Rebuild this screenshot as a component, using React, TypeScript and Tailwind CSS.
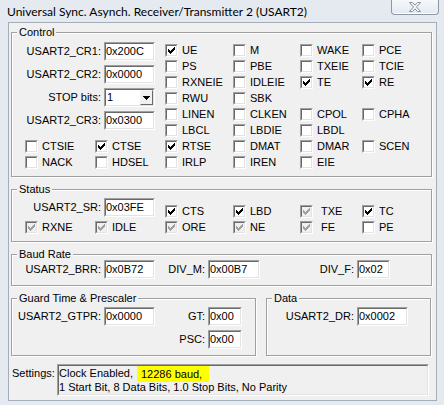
import React from 'react';

// classic 7x7 windows check glyph
const CHECK_D =
  'M6 0h1v1h-1z M5 1h2v1h-2z M0 2h1v1h-1z M4 2h3v1h-3z M0 3h2v1h-2z M3 3h3v1h-3z M0 4h5v1h-5z M1 5h3v1h-3z M2 6h1v1h-1z';

function Check({ checked, disabled }: { checked?: boolean; disabled?: boolean }) {
  return (
    <span className="flex h-[13px] w-[13px] shrink-0 border border-t-[#a0a0a0] border-l-[#a0a0a0] border-r-white border-b-white">
      <span
        className={
          'flex h-[11px] w-[11px] items-start border border-t-[#696969] border-l-[#696969] border-r-[#e3e3e3] border-b-[#e3e3e3] ' +
          (disabled ? 'bg-[#f0f0f0]' : 'bg-white')
        }
      >
        {checked && (
          <svg width="7" height="7" viewBox="0 0 7 7" shapeRendering="crispEdges" className="ml-[1px] mt-[1px]">
            <path d={CHECK_D} fill={disabled ? '#a0a0a0' : '#000'} />
          </svg>
        )}
      </span>
    </span>
  );
}

interface BoxProps {
  label?: string;
  checked?: boolean;
  disabled?: boolean;
  wide?: boolean;
}

function Box({ label, checked, disabled, wide }: BoxProps) {
  if (!label) return <div className="h-[16px]" />;
  return (
    <div className="flex h-[16px] items-center">
      <Check checked={checked} disabled={disabled} />
      <span className={wide ? 'ml-[8px]' : 'ml-[4px]'}>{label}</span>
    </div>
  );
}

function Edit({ value, width }: { value: string; width: string }) {
  return (
    <div className={'ml-[3px] h-[19px] shrink-0 border border-t-[#a0a0a0] border-l-[#a0a0a0] border-r-white border-b-white ' + width}>
      <div className="h-full border border-t-[#696969] border-l-[#696969] border-r-[#e3e3e3] border-b-[#e3e3e3] bg-white leading-[15px]">
        {value}
      </div>
    </div>
  );
}

function Field({ label, value, lw = 'w-[89px]', iw = 'w-[51px]' }: { label: string; value: string; lw?: string; iw?: string }) {
  return (
    <div className="flex h-[19px] items-center">
      <span className={'shrink-0 text-right ' + lw}>{label}</span>
      <Edit value={value} width={iw} />
    </div>
  );
}

function Combo({ label, value }: { label: string; value: string }) {
  return (
    <div className="flex h-[19px] items-center">
      <span className="w-[89px] shrink-0 text-right">{label}</span>
      <div className="ml-[3px] h-[19px] w-[51px] border border-t-[#a0a0a0] border-l-[#a0a0a0] border-r-white border-b-white">
        <div className="flex h-full border border-t-[#696969] border-l-[#696969] border-r-[#e3e3e3] border-b-[#e3e3e3] bg-white">
          <span className="flex-1 pl-[1px] leading-[15px]">{value}</span>
          <div className="flex w-[13px] items-center justify-center border border-t-[#f4f4f4] border-l-[#f4f4f4] border-r-[#696969] border-b-[#696969] bg-[#f0f0f0]">
            <svg width="7" height="4" viewBox="0 0 7 4" shapeRendering="crispEdges">
              <path d="M0 0h7v1h-1v1h-1v1h-1v1h-1v-1h-1v-1h-1v-1h-1z" fill="#000" />
            </svg>
          </div>
        </div>
      </div>
    </div>
  );
}

function Group({ title, className, pad, children }: { title: string; className?: string; pad?: string; children?: React.ReactNode }) {
  return (
    <div className={'border border-[#a0a0a0] shadow-[inset_1px_1px_0_#fff,1px_1px_0_#fff] ' + (className ?? '')}>
      <div className="-mt-[8px] -mb-[6px] ml-[5px] w-fit bg-[#f0f0f0] px-[2px] leading-[14px]">{title}</div>
      <div className={pad}>{children}</div>
    </div>
  );
}

const controlGrid: BoxProps[] = [
  { label: 'UE', checked: true }, { label: 'M' }, { label: 'WAKE' }, { label: 'PCE' },
  { label: 'PS' }, { label: 'PBE' }, { label: 'TXEIE' }, { label: 'TCIE' },
  { label: 'RXNEIE' }, { label: 'IDLEIE' }, { label: 'TE', checked: true }, { label: 'RE', checked: true },
  { label: 'RWU' }, { label: 'SBK' }, {}, {},
  { label: 'LINEN' }, { label: 'CLKEN' }, { label: 'CPOL' }, { label: 'CPHA' },
  { label: 'LBCL' }, { label: 'LBDIE' }, { label: 'LBDL' }, {},
];

const controlBottom: BoxProps[] = [
  { label: 'CTSIE' }, { label: 'CTSE', checked: true }, { label: 'RTSE', checked: true }, { label: 'DMAT' }, { label: 'DMAR' }, { label: 'SCEN' },
  { label: 'NACK' }, { label: 'HDSEL' }, { label: 'IRLP' }, { label: 'IREN' }, { label: 'EIE' }, {},
];

const statusTop: BoxProps[] = [
  { label: 'CTS', checked: true }, { label: 'LBD', checked: true }, { label: 'TXE', checked: true, disabled: true, wide: true }, { label: 'TC', checked: true },
];

const statusBottom: BoxProps[] = [
  { label: 'RXNE', checked: true, disabled: true }, { label: 'IDLE', checked: true, disabled: true }, { label: 'ORE', checked: true, disabled: true },
  { label: 'NE', checked: true, disabled: true }, { label: 'FE', checked: true, disabled: true, wide: true }, { label: 'PE' },
];

function CloseButton() {
  return (
    <div className="ml-auto mr-[5px] flex h-[15px] w-[48px] items-center justify-center rounded-b-[4px] border border-t-0 border-[#8d98a5] bg-gradient-to-b from-[#f6f8fa] to-[#e4e9ef] shadow-[inset_0_-1px_0_#fff]">
      <svg width="12" height="10" viewBox="0 0 12 10">
        <path
          d="M0.5 0.5h3l2.5 2.6 2.5-2.6h3l-4 4.5 4 4.5h-3l-2.5-2.6-2.5 2.6h-3l4-4.5z"
          fill="#f2f4f6"
          stroke="#8a94a0"
          strokeWidth="1"
        />
      </svg>
    </div>
  );
}

export default function App() {
  return (
    <div className="h-[405px] w-[444px] overflow-hidden bg-[#e5eaf0] font-['Liberation_Sans',Arial,sans-serif] text-[11px] text-black">
      <div className="flex h-[22px] items-start">
        <div className="pl-[7px] pt-[4px] font-['Lato',sans-serif] text-[12px] leading-[15px]">
          Universal Sync. Asynch. Receiver/Transmitter 2 (USART2)
        </div>
        <CloseButton />
      </div>

      <div className="ml-[8px] h-[379px] w-[429px] border border-[#a4aeb9] bg-[#f0f0f0] pl-[2px] pt-[9px]">
        <Group title="Control" className="w-[421px]" pad="pt-[9px] pb-[6px]">
          <div className="flex">
            <div className="flex w-[153px] shrink-0 flex-col gap-[4px]">
              <Field label="USART2_CR1:" value="0x200C" />
              <Field label="USART2_CR2:" value="0x0000" />
              <Combo label="STOP bits:" value="1" />
              <Field label="USART2_CR3:" value="0x0300" />
            </div>
            <div className="grid flex-1 grid-cols-[68px_67px_62px_1fr] auto-rows-[16px]">
              {controlGrid.map((b, i) => (
                <Box key={i} {...b} />
              ))}
            </div>
          </div>
          <div className="grid grid-cols-[70px_70px_68px_67px_62px_1fr] auto-rows-[16px] pl-[13px]">
            {controlBottom.map((b, i) => (
              <Box key={i} {...b} />
            ))}
          </div>
        </Group>

        <Group title="Status" className="mt-[12px] w-[421px]" pad="pt-[8px] pb-[6px]">
          <div className="flex h-[21px] items-start">
            <div className="w-[153px] shrink-0">
              <Field label="USART2_SR:" value="0x03FE" />
            </div>
            <div className="mt-[5px] grid flex-1 grid-cols-[68px_67px_62px_1fr] auto-rows-[16px]">
              {statusTop.map((b, i) => (
                <Box key={i} {...b} />
              ))}
            </div>
          </div>
          <div className="grid grid-cols-[70px_70px_68px_67px_62px_1fr] auto-rows-[16px] pl-[13px]">
            {statusBottom.map((b, i) => (
              <Box key={i} {...b} />
            ))}
          </div>
        </Group>

        <Group title="Baud Rate" className="mt-[12px] w-[421px]" pad="pt-[5px] pb-[6px]">
          <div className="flex">
            <Field label="USART2_BRR:" value="0x0B72" />
            <Field label="DIV_M:" value="0x00B7" lw="w-[50px]" iw="w-[52px]" />
            <Field label="DIV_F:" value="0x02" lw="w-[94px]" iw="w-[33px]" />
          </div>
        </Group>

        <div className="mt-[12px] flex gap-[10px]">
          <Group title="Guard Time & Prescaler" className="w-[245px]" pad="pt-[8px] pb-[6px]">
            <div className="flex flex-col gap-[4px]">
              <div className="flex">
                <Field label="USART2_GTPR:" value="0x0000" />
                <Field label="GT:" value="0x00" lw="w-[50px]" iw="w-[34px]" />
              </div>
              <Field label="PSC:" value="0x00" lw="w-[193px]" iw="w-[34px]" />
            </div>
          </Group>
          <Group title="Data" className="w-[165px]" pad="pt-[8px] pb-[6px]">
            <Field label="USART2_DR:" value="0x0002" lw="w-[87px]" />
          </Group>
        </div>

        <div className="mt-[8px] flex items-start">
          <span className="w-[46px] shrink-0 pl-[1px] pt-[2px] leading-[14px]">Settings:</span>
          <div className="h-[32px] w-[372px] border border-t-[#a0a0a0] border-l-[#a0a0a0] border-r-white border-b-white">
            <div className="h-full border border-t-[#696969] border-l-[#696969] border-r-[#e3e3e3] border-b-[#e3e3e3] leading-[14px]">
              <div className="flex">
                <span>Clock Enabled,</span>
                <span className="ml-[4px] bg-[#ffff00] pl-[4px] pr-[7px] leading-[16px]">12286 baud,</span>
              </div>
              <div className="-mt-[2px]">1 Start Bit, 8 Data Bits, 1.0 Stop Bits, No Parity</div>
            </div>
          </div>
        </div>
      </div>
    </div>
  );
}
